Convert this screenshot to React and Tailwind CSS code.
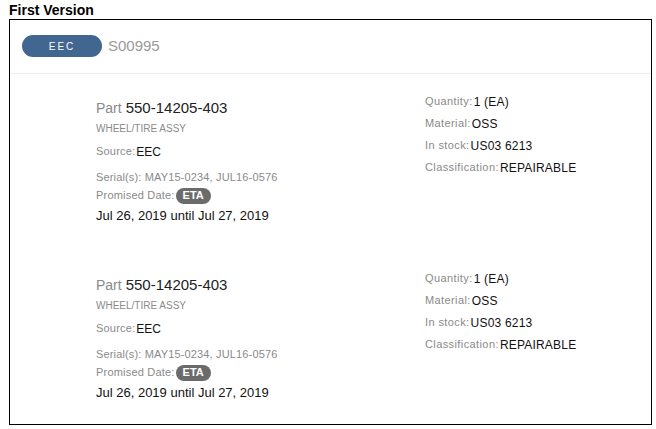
import React from "react";

const items = [
  {
    part: "550-14205-403",
    description: "WHEEL/TIRE ASSY",
    source: "EEC",
    serials: "MAY15-0234, JUL16-0576",
    dates: "Jul 26, 2019 until Jul 27, 2019",
    quantity: "1 (EA)",
    material: "OSS",
    stock: "US03 6213",
    classification: "REPAIRABLE",
  },
  {
    part: "550-14205-403",
    description: "WHEEL/TIRE ASSY",
    source: "EEC",
    serials: "MAY15-0234, JUL16-0576",
    dates: "Jul 26, 2019 until Jul 27, 2019",
    quantity: "1 (EA)",
    material: "OSS",
    stock: "US03 6213",
    classification: "REPAIRABLE",
  },
];

const Field = ({ label, value }) => (
  <div className="h-[22px] flex items-center">
    <span className="text-[11px] text-[#8a8a8a] tracking-[0.4px]">{label}:</span>
    <span className="text-[12px] text-[#111] ml-[1px] tracking-[0.2px]">{value}</span>
  </div>
);

const App = () => {
  return (
    <div className="w-[656px] h-[429px] bg-white font-['Liberation_Sans',Arial,sans-serif]">
      <h1 className="px-[9px] h-[19px] text-[14px] font-bold leading-[21px] text-black">
        First Version
      </h1>

      <div className="ml-[9px] w-[643px] h-[406px] border border-black">
        {/* order header */}
        <div className="flex items-center px-[12px] py-[15px] border-b border-[#ececec]">
          <span className="w-[80px] h-[22px] rounded-full bg-[#41668f] text-white text-[10px] tracking-[2px] flex items-center justify-center">
            EEC
          </span>
          <span className="ml-[6px] text-[15px] text-[#9a9a9a]">S00995</span>
        </div>

        {/* line items */}
        <div className="flex flex-col">
          {items.map((item, index) => (
            <div
              key={index}
              className={`flex pl-[86px] pt-[17px] ${index === 0 ? "pb-[25px]" : ""}`}
            >
              <div className="w-[329px] mt-[8px]">
                <div className="h-[20px] flex items-center">
                  <span className="text-[14px] text-[#8a8a8a]">Part</span>
                  <span className="text-[15px] text-[#222] ml-[4px]">{item.part}</span>
                </div>
                <div className="h-[20px] flex items-center text-[10px] text-[#8a8a8a]">
                  {item.description}
                </div>
                <div className="h-[20px] mt-[3px] flex items-center">
                  <span className="text-[11px] text-[#8a8a8a] tracking-[0.2px]">Source:</span>
                  <span className="text-[12px] text-[#111] ml-[1px]">{item.source}</span>
                </div>
                <div className="h-[18px] mt-[7px] flex items-center text-[11px] text-[#8a8a8a] tracking-[0.15px]">
                  Serial(s): {item.serials}
                </div>
                <div className="h-[18px] flex items-center">
                  <span className="text-[11px] text-[#8a8a8a] tracking-[0.2px]">Promised Date:</span>
                  <span className="ml-[1px] h-[16px] px-[7px] rounded-full bg-[#6b6b6b] text-white text-[11px] font-bold flex items-center">
                    ETA
                  </span>
                </div>
                <div className="h-[20px] mt-[1px] flex items-center text-[13px] text-[#111]">
                  {item.dates}
                </div>
              </div>

              <div>
                <Field label="Quantity" value={item.quantity} />
                <Field label="Material" value={item.material} />
                <Field label="In stock" value={item.stock} />
                <Field label="Classification" value={item.classification} />
              </div>
            </div>
          ))}
        </div>
      </div>
    </div>
  );
};

export default App;
